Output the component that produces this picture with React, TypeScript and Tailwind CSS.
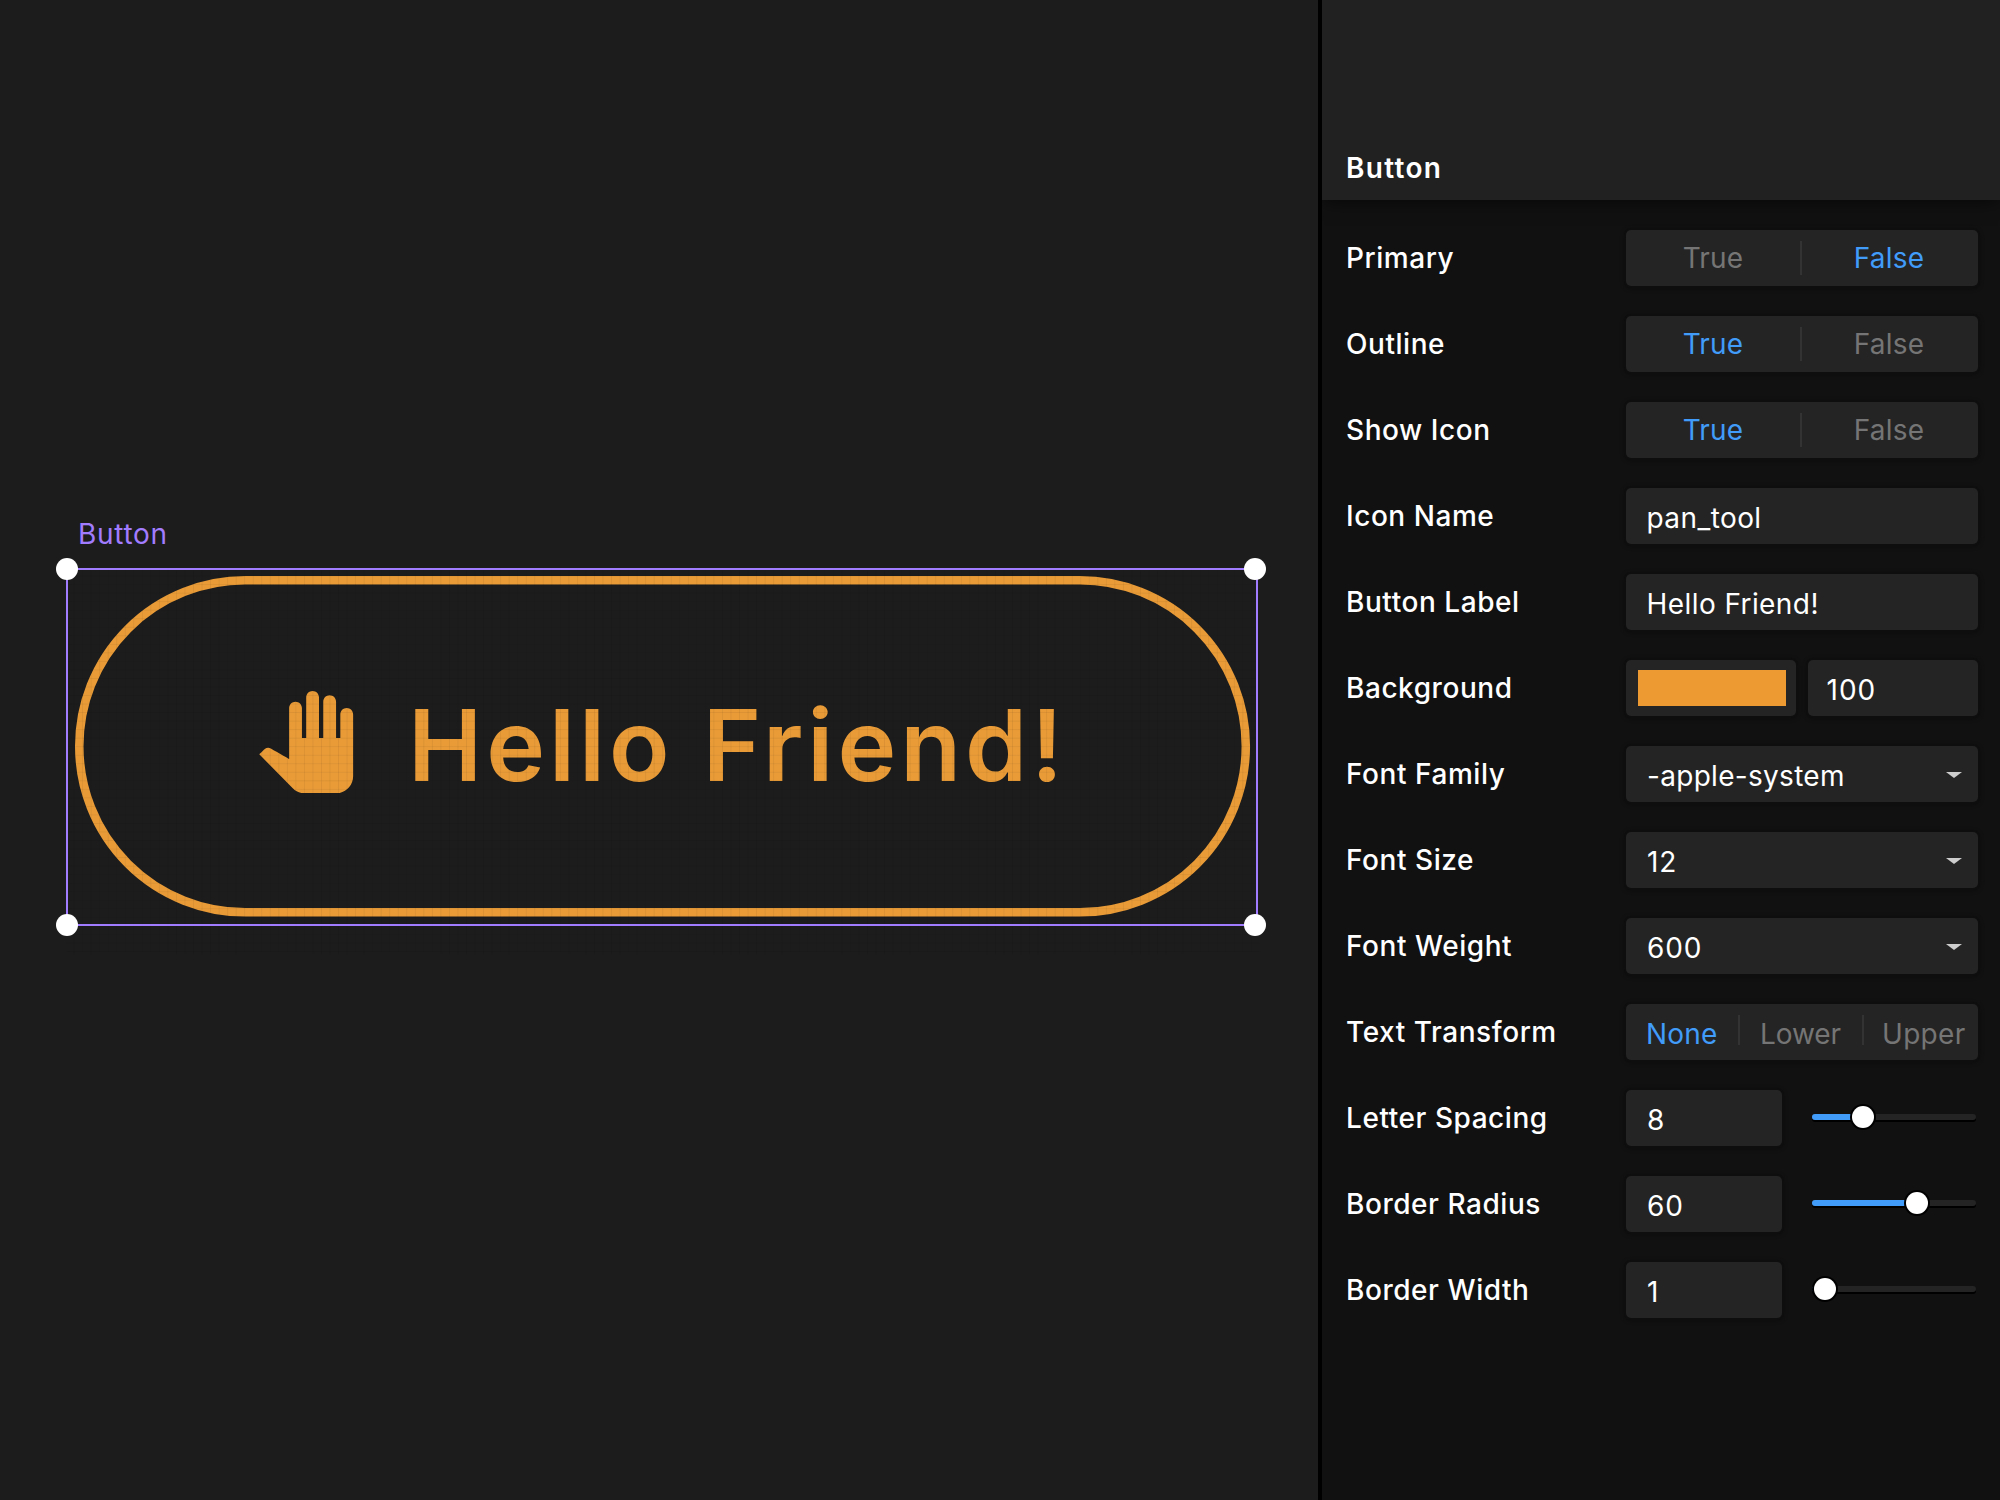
import type { ReactNode } from 'react';

const FIELD = 'h-14 rounded-[5px] bg-[#242424] shadow-[0_0_0_2px_#0e0e0e,0_1px_4px_2px_rgba(0,0,0,0.3)]';

function Row({ label, children }: { label: string; children: ReactNode }) {
  return (
    <div className="flex h-14 items-center justify-between">
      <span className="text-[28px] leading-[56px] font-[540] tracking-[0.55px] whitespace-nowrap text-white">{label}</span>
      <div className="flex w-[352px] shrink-0 items-center">{children}</div>
    </div>
  );
}

function BooleanField({ value }: { value: boolean }) {
  return (
    <div className={`${FIELD} flex w-full items-center pr-[2px] text-[28px] tracking-[0.2px]`}>
      <span className={`flex-1 text-center ${value ? 'text-[#419bf9]' : 'text-[#757575]'}`}>True</span>
      <span className="h-[34px] w-0.5 bg-[#333]" />
      <span className={`flex-1 text-center ${value ? 'text-[#757575]' : 'text-[#419bf9]'}`}>False</span>
    </div>
  );
}

function TextField({ value }: { value: string }) {
  return (
    <div className={`${FIELD} flex w-full items-center pt-1 pl-[20.5px] text-[28px] tracking-[0.42px] text-white`}>{value}</div>
  );
}

function SelectField({ value, numeric }: { value: string; numeric?: boolean }) {
  return (
    <div className={`${FIELD} flex w-full items-center justify-between pr-4 pl-[21px] text-white`}>
      <span className={`pt-1 text-[28px] ${numeric ? 'tracking-[0.9px]' : 'tracking-[0.3px]'}`}>{value}</span>
      <svg className="mt-0.5 h-1.5 w-4" viewBox="0 0 16 6">
        <path d="M0 0h16L8 6z" fill="#cdcdcd" />
      </svg>
    </div>
  );
}

function ColorField({ opacity }: { opacity: string }) {
  return (
    <div className="flex w-full gap-3">
      <div className={`${FIELD} w-[170px] pt-2.5 pl-3`}>
        <div className="h-9 w-[148px] bg-[#ee9a33]" />
      </div>
      <div className={`${FIELD} flex w-[170px] items-center pt-1 pl-[18.5px] text-[28px] tracking-[1px] text-white`}>{opacity}</div>
    </div>
  );
}

function TransformField() {
  return (
    <div className={`${FIELD} flex w-full items-center pl-5 text-[28px] whitespace-nowrap text-[#757575]`}>
      <span className="w-[92px] pt-1 tracking-[0.2px] text-[#419bf9]">None</span>
      <span className="mb-1 h-[30px] w-0.5 bg-[#333]" />
      <span className="ml-5 w-[102px] pt-1 tracking-[-0.1px]">Lower</span>
      <span className="mb-1 h-[30px] w-0.5 bg-[#333]" />
      <span className="ml-[18px] pt-1 tracking-[0.3px]">Upper</span>
    </div>
  );
}

function SliderField({ value, position }: { value: string; position: number }) {
  return (
    <div className="flex w-full items-center">
      <div className={`${FIELD} flex w-[156px] items-center pt-1 pl-[21px] text-[28px] tracking-[1px] text-white`}>{value}</div>
      <div className="relative ml-[30px] h-1.5 w-[164px] -translate-y-px rounded-full bg-[#242424] shadow-[0_2px_0_#000]">
        <div className="h-1.5 rounded-full bg-[#419bf9]" style={{ width: position }} />
        <div
          className="absolute -top-2 size-[22px] -translate-x-1/2 rounded-full bg-white shadow-[0_0_0_2px_#000]"
          style={{ left: position }}
        />
      </div>
    </div>
  );
}

function Canvas() {
  return (
    <main className="relative h-full w-[1318px] shrink-0 bg-[#1c1c1c]">
      <span className="absolute top-[506px] left-[78px] text-[28px] leading-[56px] tracking-[0.7px] text-[#a27cff]">Button</span>

      <div className="absolute top-[576px] left-[74.6px] h-[341px] w-[1176px] text-[#e99b37]">
        <span className="absolute top-0 left-0 h-[40px] w-[138px] origin-top-left scale-[8.515] rounded-full border border-current" />
        <div className="flex h-full items-center pl-[180.6px]">
          <svg className="mb-[9px] size-[102.4px] shrink-0" viewBox="0 0 24 24" fill="currentColor">
            <path d="M23 5.5V20c0 2.2-1.8 4-4 4h-7.3c-1.08 0-2.1-.43-2.85-1.19L1 14.83s1.26-1.23 1.3-1.25c.22-.19.49-.29.79-.29.22 0 .42.06.6.16.04.01 4.31 2.46 4.31 2.46V4c0-.83.67-1.5 1.5-1.5S11 3.17 11 4v7h1V1.5c0-.83.67-1.5 1.5-1.5S15 .67 15 1.5V11h1V2.5c0-.83.67-1.5 1.5-1.5s1.5.67 1.5 1.5V11h1V5.5c0-.83.67-1.5 1.5-1.5s1.5.67 1.5 1.5z" />
          </svg>
          <span className="mb-[3px] ml-[50.5px] text-[99.5px] leading-[120px] font-semibold tracking-[3.98px] whitespace-nowrap">Hello Friend!</span>
        </div>
      </div>

      <div className="pointer-events-none absolute top-[567.5px] left-[66.1px] h-[386px] w-[1193px] bg-[linear-gradient(to_right,transparent_7.53px,rgba(0,0,0,0.06)_7.53px),linear-gradient(to_bottom,transparent_7.53px,rgba(0,0,0,0.06)_7.53px)] bg-[length:8.533px_8.533px]" />

      <div className="absolute top-[568px] left-[66px] h-[358px] w-[1192px] border-2 border-[#a27cff]">
        <i className="absolute -top-3 -left-3 size-[22px] rounded-full bg-white" />
        <i className="absolute -top-3 -right-2.5 size-[22px] rounded-full bg-white" />
        <i className="absolute -bottom-3 -left-3 size-[22px] rounded-full bg-white" />
        <i className="absolute -right-2.5 -bottom-3 size-[22px] rounded-full bg-white" />
      </div>
    </main>
  );
}

export default function App() {
  return (
    <div className="flex h-[1500px] w-[2000px] overflow-hidden bg-black font-['Inter',sans-serif] font-[430]">
      <Canvas />
      <aside className="ml-1 flex flex-1 flex-col overflow-hidden bg-[#111]">
        <header className="flex h-[200px] shrink-0 items-end bg-[#212121] pb-1 pl-6 shadow-[0_4px_16px_-2px_rgba(0,0,0,0.6)]">
          <h1 className="text-[28px] leading-[56px] font-semibold tracking-[1.3px] text-white">Button</h1>
        </header>
        <div className="flex flex-col gap-[30px] pt-[30px] pr-[22px] pl-[24px]">
          <Row label="Primary"><BooleanField value={false} /></Row>
          <Row label="Outline"><BooleanField value /></Row>
          <Row label="Show Icon"><BooleanField value /></Row>
          <Row label="Icon Name"><TextField value="pan_tool" /></Row>
          <Row label="Button Label"><TextField value="Hello Friend!" /></Row>
          <Row label="Background"><ColorField opacity="100" /></Row>
          <Row label="Font Family"><SelectField value="-apple-system" /></Row>
          <Row label="Font Size"><SelectField value="12" numeric /></Row>
          <Row label="Font Weight"><SelectField value="600" numeric /></Row>
          <Row label="Text Transform"><TransformField /></Row>
          <Row label="Letter Spacing"><SliderField value="8" position={51} /></Row>
          <Row label="Border Radius"><SliderField value="60" position={105} /></Row>
          <Row label="Border Width"><SliderField value="1" position={13} /></Row>
        </div>
      </aside>
    </div>
  );
}
